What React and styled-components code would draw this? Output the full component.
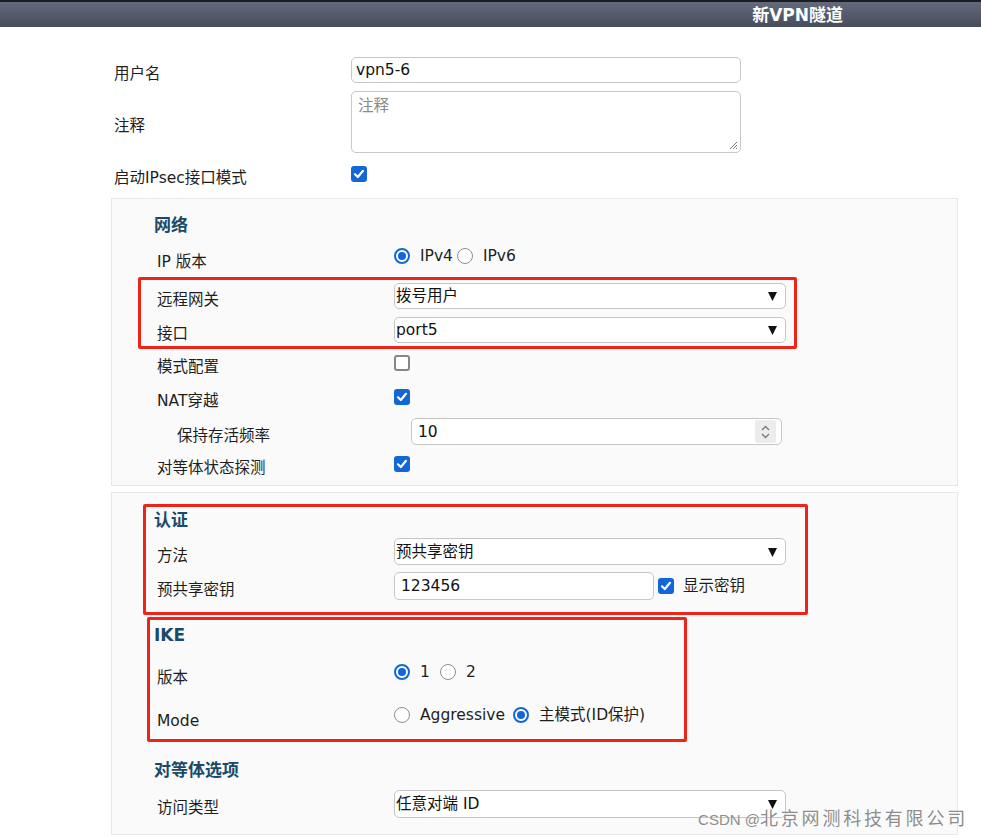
import React from 'react';
import styled, { createGlobalStyle } from 'styled-components';

const GlobalStyle = createGlobalStyle`
  body {
    margin: 0;
    background: #fff;
    font-family: "DejaVu Sans", "Noto Sans CJK SC", sans-serif;
    font-size: 15.5px;
    color: #1e1e1e;
  }
`;

const Page = styled.div`
  position: relative;
  width: 981px;
  height: 839px;
  overflow: hidden;
  background: #fff;
`;

const TitleBar = styled.header`
  height: 25px;
  border-top: 2px solid #1b1d22;
  background: linear-gradient(#636a7c, #464c59);
  display: flex;
  align-items: center;
  justify-content: flex-end;
  padding-right: 138px;
`;

const Title = styled.h1`
  margin: 0;
  font-size: 17px;
  font-weight: bold;
  color: #fff;
  line-height: 20px;
`;

const TopForm = styled.div`
  display: flex;
  flex-direction: column;
  gap: 8px;
  padding: 30px 0 0 114px;
`;

const Panel = styled.section`
  margin: ${({ $mt }) => $mt}px 23px 0 111px;
  background: #fafafa;
  border: 1px solid #e7e7e7;
  padding: ${({ $pt }) => $pt}px 0 ${({ $pb }) => $pb}px 45px;
  display: flex;
  flex-direction: column;
`;

const Heading = styled.h2`
  margin: ${({ $mt }) => $mt || 0}px 0 0 -3px;
  font-size: 17px;
  line-height: 20px;
  font-weight: bold;
  color: #1a4a6a;
`;

const Highlight = styled.div`
  align-self: flex-start;
  display: flex;
  flex-direction: column;
  border: 3px solid #ee2418;
  border-radius: 2px;
  margin: ${({ $mt }) => $mt || 0}px 0 0 ${({ $ml }) => $ml}px;
  padding: ${({ $pad }) => $pad};
  width: ${({ $w }) => $w}px;
  box-sizing: border-box;
`;

const Row = styled.div`
  display: grid;
  grid-template-columns: ${({ $label }) => $label || 237}px max-content;
  align-items: center;
  height: ${({ $h }) => $h || 26}px;
  margin-top: ${({ $mt }) => $mt || 0}px;
`;

const Label = styled.span`
  padding-top: 8px;
  padding-left: ${({ $indent }) => $indent || 0}px;
  line-height: 18px;
  white-space: nowrap;
`;

const Field = styled.div`
  box-sizing: border-box;
  width: ${({ $w }) => $w}px;
  height: ${({ $h }) => $h || 26}px;
  border: 1px solid #c6c6c6;
  border-radius: 5px;
  background: #fff;
  display: flex;
  align-items: center;
  justify-content: space-between;
  padding: 0 ${({ $pr }) => $pr || 6}px 0 ${({ $pl }) => $pl || 6}px;
  line-height: 18px;
  color: #111;
  white-space: nowrap;
`;

const Textarea = styled.div`
  position: relative;
  box-sizing: border-box;
  width: 390px;
  height: 62px;
  border: 1px solid #c6c6c6;
  border-radius: 5px;
  background: #fff;
  padding: 5px 6px;
  color: #8a8a8a;
  line-height: 18px;
`;

const Grip = styled.svg`
  position: absolute;
  right: 2px;
  bottom: 2px;
`;

const Spinner = styled.span`
  width: 21px;
  height: 23px;
  background: #ececec;
  border-radius: 2px;
  display: flex;
  flex-direction: column;
  align-items: center;
  justify-content: center;
  gap: 2px;
`;

const Check = styled.span`
  box-sizing: border-box;
  flex: none;
  width: 16px;
  height: 16px;
  border-radius: 3px;
  display: inline-flex;
  align-items: center;
  justify-content: center;
  background: ${({ $on }) => ($on ? '#1167d8' : '#fff')};
  border: ${({ $on }) => ($on ? 'none' : '2px solid #878787')};
  margin-left: ${({ $ml }) => $ml || 0}px;
`;

const Radio = styled.span`
  position: relative;
  box-sizing: border-box;
  flex: none;
  width: 16px;
  height: 16px;
  border-radius: 50%;
  background: #fff;
  border: ${({ $on }) => ($on ? '2px solid #1167d8' : '1.5px solid #8f8f8f')};
  &::after {
    content: '';
    display: ${({ $on }) => ($on ? 'block' : 'none')};
    position: absolute;
    inset: 2px;
    border-radius: 50%;
    background: #1167d8;
  }
`;

const Options = styled.div`
  display: flex;
  align-items: center;
  gap: ${({ $gap }) => $gap || 4}px;
  margin-top: -4px;
`;

const Option = styled.span`
  display: inline-flex;
  align-items: center;
  gap: 10px;
  line-height: 18px;
  white-space: nowrap;
`;

const Inline = styled.div`
  display: flex;
  align-items: center;
`;

const CheckLabel = styled.span`
  margin-left: 9px;
  line-height: 18px;
`;

const Watermark = styled.div`
  position: absolute;
  right: 13px;
  bottom: 8px;
  color: #8d8d8d;
  font-family: "Liberation Sans", "Noto Sans CJK SC", sans-serif;
  font-size: 15px;
  line-height: 22px;
  text-shadow: 0 0 1px #fff;
`;

const WatermarkCjk = styled.span`
  font-size: 18px;
  letter-spacing: 2.8px;
`;

const Tick = () => (
  <svg width="12" height="12" viewBox="0 0 12 12">
    <path d="M2 6.3 L4.8 9 L10 2.8" fill="none" stroke="#fff" strokeWidth="2.2" strokeLinecap="round" strokeLinejoin="round" />
  </svg>
);

const Arrow = () => (
  <svg width="9" height="10" viewBox="0 0 9 10">
    <polygon points="0,1 9,1 4.5,10" fill="#111" />
  </svg>
);

const Select = ({ w = 392, h = 26, children }) => (
  <Field $w={w} $h={h} $pl={1} $pr={8}>
    <span>{children}</span>
    <Arrow />
  </Field>
);

const Chevron = ({ up }) => (
  <svg width="9" height="6" viewBox="0 0 9 6">
    <path d={up ? 'M1 5 L4.5 1.5 L8 5' : 'M1 1 L4.5 4.5 L8 1'} fill="none" stroke="#7a7a7a" strokeWidth="1.3" />
  </svg>
);

export default function App() {
  return (
    <Page>
      <GlobalStyle />
      <TitleBar>
        <Title>新VPN隧道</Title>
      </TitleBar>

      <TopForm>
        <Row>
          <Label>用户名</Label>
          <Field $w={390} $pl={4}>vpn5-6</Field>
        </Row>
        <Row $h={62}>
          <Label>注释</Label>
          <Textarea>
            注释
            <Grip width="10" height="10" viewBox="0 0 10 10">
              <path d="M9 2 L2 9 M9 5 L5 9 M9 8 L8 9" stroke="#777" strokeWidth="1" />
            </Grip>
          </Textarea>
        </Row>
        <Row>
          <Label>启动IPsec接口模式</Label>
          <Check $on><Tick /></Check>
        </Row>
      </TopForm>

      <Panel $mt={11} $pt={16} $pb={8}>
        <Heading>网络</Heading>
        <Row $h={34} $mt={6}>
          <Label>IP 版本</Label>
          <Options>
            <Option><Radio $on />IPv4</Option>
            <Option><Radio />IPv6</Option>
          </Options>
        </Row>
        <Highlight $mt={2} $ml={-19} $w={659} $pad="3px 8px 3px 16px">
          <Row>
            <Label>远程网关</Label>
            <Select>拨号用户</Select>
          </Row>
          <Row $mt={8}>
            <Label>接口</Label>
            <Select>port5</Select>
          </Row>
        </Highlight>
        <Row $mt={1}>
          <Label>模式配置</Label>
          <Check />
        </Row>
        <Row $mt={8}>
          <Label>NAT穿越</Label>
          <Check $on><Tick /></Check>
        </Row>
        <Row $mt={8} $h={27} $label={254}>
          <Label $indent={20}>保持存活频率</Label>
          <Field $w={371} $h={27} $pl={6} $pr={5}>
            <span>10</span>
            <Spinner>
              <Chevron up />
              <Chevron />
            </Spinner>
          </Field>
        </Row>
        <Row $mt={6}>
          <Label>对等体状态探测</Label>
          <Check $on><Tick /></Check>
        </Row>
      </Panel>

      <Panel $mt={6} $pt={11} $pb={16}>
        <Highlight $ml={-14} $w={665} $pad="3px 19px 12px 11px">
          <Heading>认证</Heading>
          <Row $mt={8} $h={27}>
            <Label>方法</Label>
            <Select h={27}>预共享密钥</Select>
          </Row>
          <Row $mt={7} $h={28}>
            <Label>预共享密钥</Label>
            <Inline>
              <Field $w={260} $h={28}>123456</Field>
              <Check $on $ml={4}><Tick /></Check>
              <CheckLabel>显示密钥</CheckLabel>
            </Inline>
          </Row>
        </Highlight>
        <Highlight $mt={2} $ml={-10} $w={540} $pad="5px 0 5px 7px">
          <Heading>IKE</Heading>
          <Row $h={34} $mt={12}>
            <Label>版本</Label>
            <Options $gap={10}>
              <Option><Radio $on />1</Option>
              <Option><Radio />2</Option>
            </Options>
          </Row>
          <Row $h={34} $mt={9}>
            <Label>Mode</Label>
            <Options $gap={8}>
              <Option><Radio />Aggressive</Option>
              <Option><Radio $on />主模式(ID保护)</Option>
            </Options>
          </Row>
        </Highlight>
        <Heading $mt={18}>对等体选项</Heading>
        <Row $mt={10} $h={28}>
          <Label>访问类型</Label>
          <Select h={28}>任意对端 ID</Select>
        </Row>
      </Panel>

      <Watermark>
        CSDN @<WatermarkCjk>北京网测科技有限公司</WatermarkCjk>
      </Watermark>
    </Page>
  );
}
